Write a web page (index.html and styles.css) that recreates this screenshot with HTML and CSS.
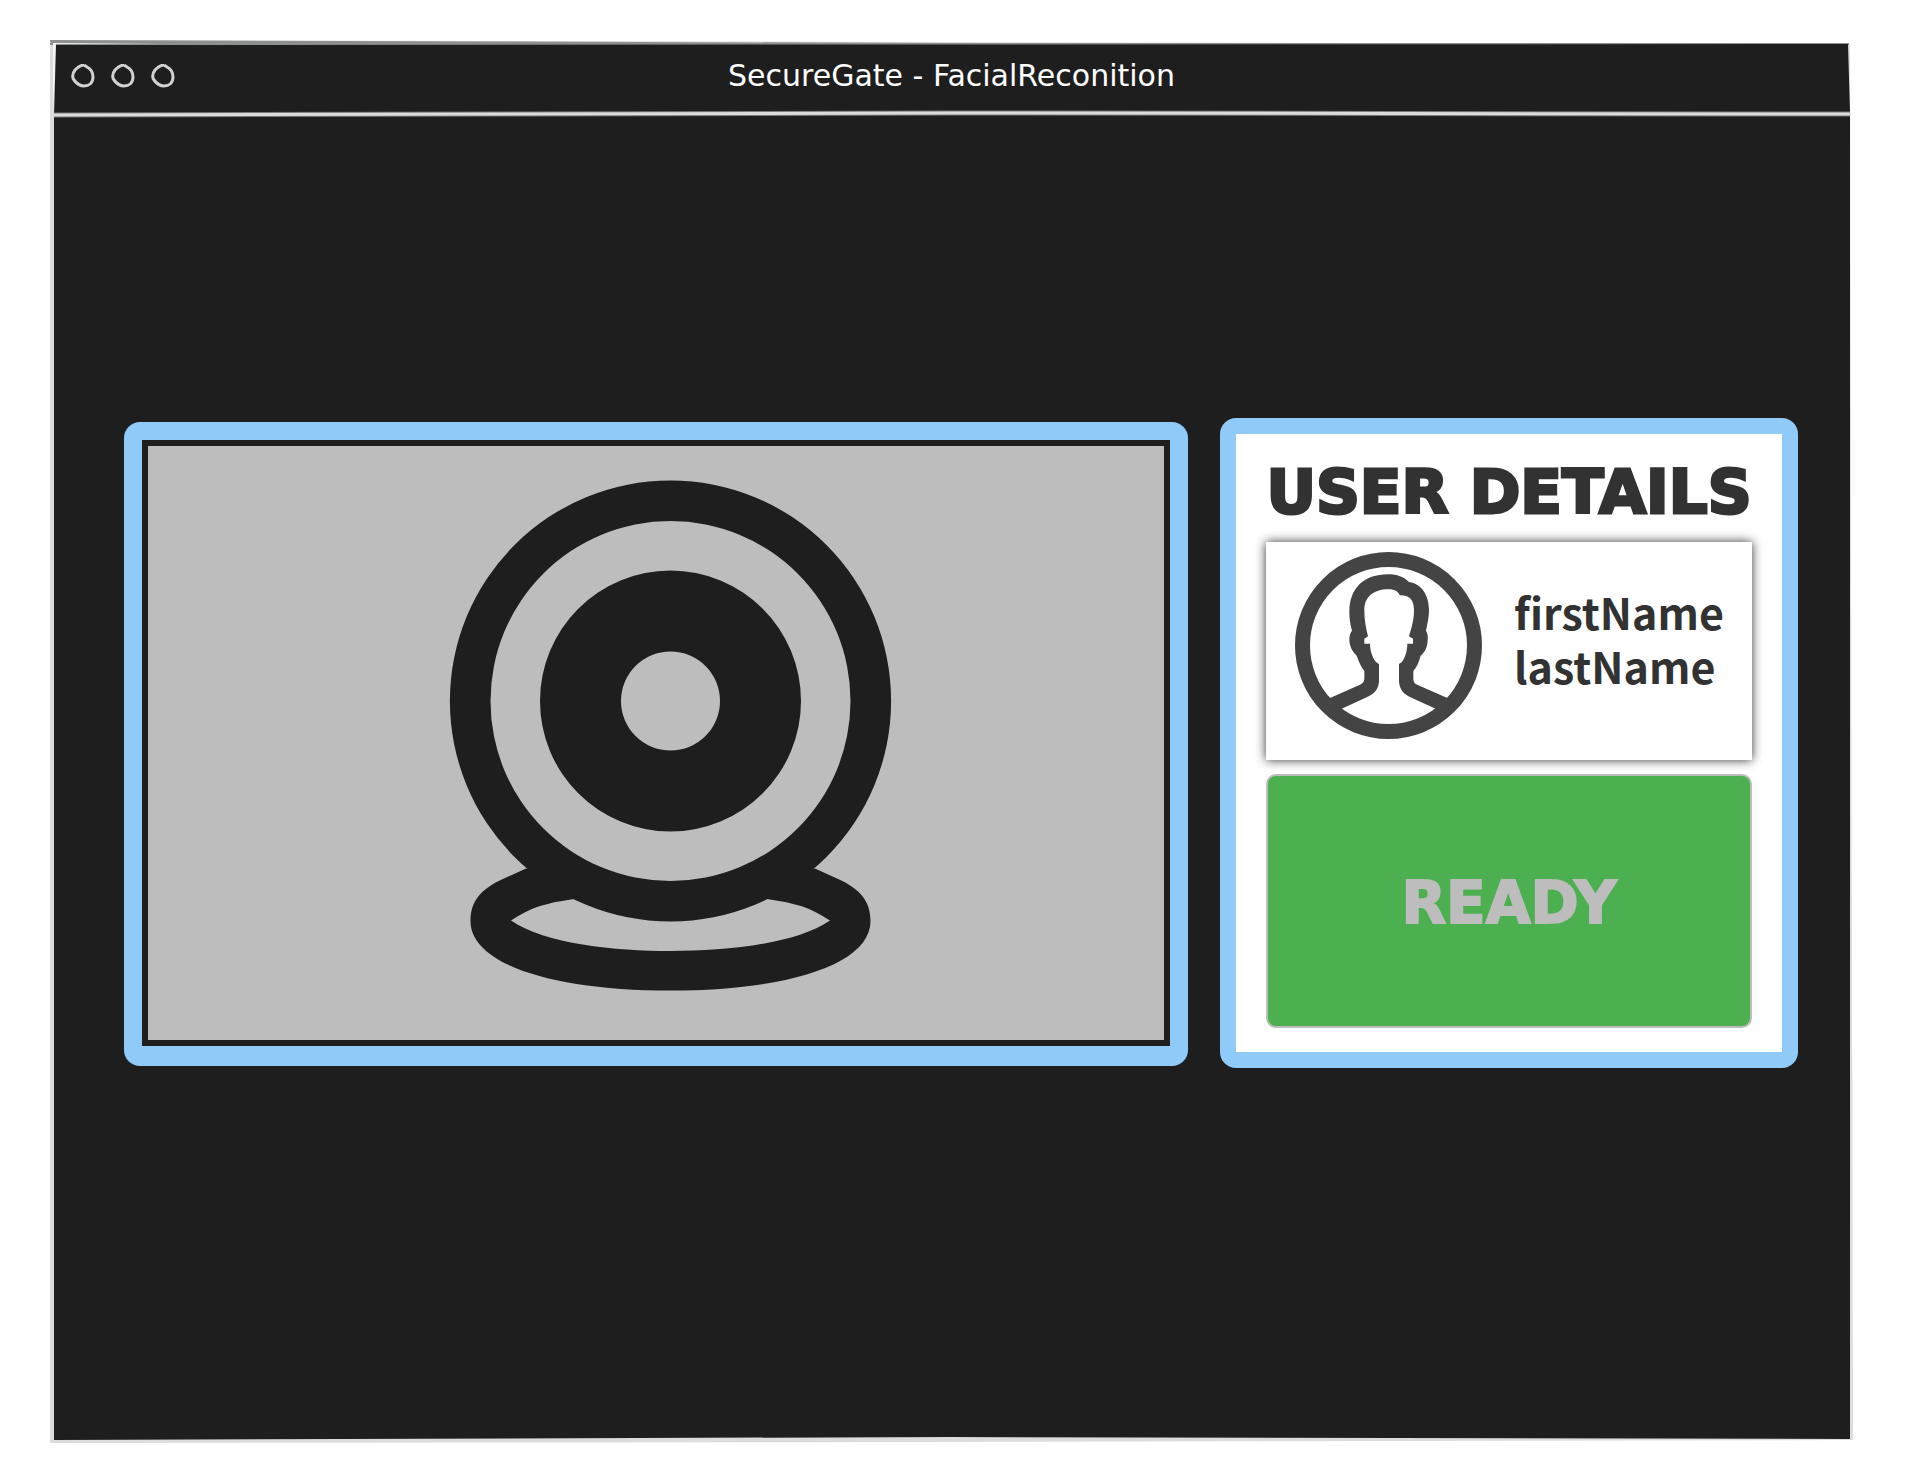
FILE: index.html
```html
<!DOCTYPE html>
<html lang="en">
<head>
<meta charset="utf-8">
<meta name="viewport" content="width=device-width, initial-scale=1">
<title>SecureGate - FacialReconition</title>
<link rel="stylesheet" href="styles.css">
</head>
<body>
<div class="window">
  <svg class="window-outline" viewBox="0 0 1803 1403" preserveAspectRatio="none" aria-hidden="true">
    <path fill="#dcdcdc" d="M0 0L900 2L1800 4L1803 1400L900 1402L0 1403Z"/>
    <path fill="#8e9090" d="M0 0L900 3L1799 3V5H0V3H1V2H0Z"/>
    <path fill="#f4f4f4" d="M3 3L110 4H6L3 75Z"/>
    <path fill="#1e1e1e" d="M6 5L1798 4L1800 72V1399L900 1397L4 1400V76Z"/>
    <path fill="none" stroke="#77797a" stroke-width="5" d="M4 75L900 73L1800 74"/>
    <path fill="none" stroke="#dcdcdc" stroke-width="3" d="M3 75L900 73L1801 74"/>
  </svg>
  <header class="titlebar">
    <div class="dots">
      <svg class="dot" viewBox="0 0 24 24" aria-hidden="true"><path d="M13 1C10 1 7 3 4 6C1 10 1 13 3 16C6 20 9 22 13 22C18 22 22 19 22 13C22 9 20 5 16 3L13 1"/></svg>
      <svg class="dot" viewBox="0 0 24 24" aria-hidden="true"><path d="M13 1C10 1 7 3 4 6C1 10 1 13 3 16C6 20 9 22 13 22C18 22 22 19 22 13C22 9 20 5 16 3L13 1"/></svg>
      <svg class="dot" viewBox="0 0 24 24" aria-hidden="true"><path d="M13 1C10 1 7 3 4 6C1 10 1 13 3 16C6 20 9 22 13 22C18 22 22 19 22 13C22 9 20 5 16 3L13 1"/></svg>
    </div>
    <h1 class="title">SecureGate - FacialReconition</h1>
  </header>
  <main class="content">
    <section class="camera" aria-label="Camera">
      <svg class="camera-view" viewBox="148 446 1016 594" role="img" aria-label="Webcam">
        <g fill="#1e1e1e" fill-rule="evenodd">
          <path d="M670.500 480.500a220.500 220.500 0 1 0 0 441a220.500 220.500 0 1 0 0-441ZM670.500 521a180 180 0 1 1 0 360a180 180 0 1 1 0-360Z"/>
          <path d="M670.500 570.500a130.500 130.500 0 1 0 0 261a130.500 130.500 0 1 0 0-261ZM670.500 651.500a49.500 49.500 0 1 1 0 99a49.500 49.500 0 1 1 0-99Z"/>
          <path d="M526 868.500L504 878.500C480 889 470.500 902 470.500 921C470.500 965 555 990.500 670.500 990.500S870.500 965 870.500 921C870.500 902 861 889 837 878.500L815 868.500L760 880L767 899C801 904 812 909 830 920.500C796 944 726 951 670.500 951S545 944 511 920.500C529 909 540 904 574 899L581 880Z"/>
        </g>
      </svg>
    </section>
    <section class="details">
      <h2 class="details-title">USER DETAILS</h2>
      <div class="user-card">
        <svg class="avatar" viewBox="75 65 561 561" aria-hidden="true">
          <circle cx="355.500" cy="345.500" r="258" fill="none" stroke="#444" stroke-width="45"/>
          <path fill="#444" d="M180 503L270 463C283 457 283 450 283 440V422C272 408 266 392 260 376C245 362 238 345 238 327C238 315 241 308 246 301C240 280 238 262 238 245C238 175 280 132 355 132C380 132 402 140 417 155C455 160 477 195 477 240C477 262 472 282 468 301C474 312 474 320 473 330C472 350 466 365 452 376C447 394 441 410 430 422V440C430 455 432 459 445 465L532 503L540 520L497 535L418 499C397 489 387 472 387 450V401L395 396C405 382 412 362 412 340H429V325L417 318C424 295 432 270 432 240C432 208 418 194 390 195C382 181 372 177 355 177C310 177 283 200 283 240C283 270 288 295 294 318L283 325V340H300C300 362 307 380 318 395L327 402V450C327 475 315 490 290 501L215 535L172 520Z"/>
        </svg>
        <p class="user-name">firstName<br>lastName</p>
      </div>
      <button class="ready" type="button">READY</button>
    </section>
  </main>
</div>
</body>
</html>
```
FILE: styles.css
```css
* {
  box-sizing: border-box;
}

body {
  margin: 0;
  padding: 40px 53px 41px 50px;
  background: #fff;
  color: #323232;
  font-family: "DejaVu Sans", sans-serif;
}

.window {
  position: relative;
  min-height: calc(100vh - 81px);
}

/* Rough hand-drawn outline behind the window content */
.window-outline {
  position: absolute;
  inset: 0;
  width: 100%;
  height: 100%;
  z-index: -1;
}

.titlebar {
  display: grid;
  grid-template-columns: 1fr auto 1fr;
  align-items: center;
  height: 72px;
  padding: 0 21px;
}

.dots {
  display: flex;
  gap: 16px;
}

.dot {
  width: 24px;
  height: 24px;
  fill: none;
  stroke: #d2d2d2;
  stroke-width: 3;
}

.title {
  margin: 0;
  color: #fff;
  font-size: 30px;
  font-weight: 400;
  line-height: 40px;
}

.content {
  display: grid;
  grid-template-columns: 1064fr 578fr;
  gap: 32px;
  align-items: start;
  padding: 306px 55px 40px 74px;
}

.camera {
  margin-top: 4px;
  padding: 18px 18px 20px;
  border-radius: 16px;
  background: #90caf9;
}

.camera-view {
  display: block;
  width: 100%;
  border: 6px solid #1e1e1e;
  background: #bdbdbd;
}

.details {
  border: 16px solid #90caf9;
  border-radius: 16px;
  padding: 0 30px 24px;
  background: #fff;
}

.details-title {
  display: flex;
  justify-content: center;
  margin: 0;
  padding-top: 8px;
  font-size: 61px;
  font-weight: 700;
  line-height: 100px;
  white-space: nowrap;
  -webkit-text-stroke: 3px currentColor;
}

.user-card {
  display: flex;
  gap: 32px;
  height: 218px;
  padding: 10px 0 0 29px;
  background: #fff;
  box-shadow: 0 0 10px rgba(0, 0, 0, 0.8);
}

.avatar {
  flex: none;
  width: 187px;
  height: 187px;
}

.user-name {
  margin: 0;
  padding-top: 32px;
  font: 700 43px/54px "Noto Sans CJK JP", sans-serif;
}

.ready {
  display: block;
  width: 100%;
  height: 254px;
  margin-top: 14px;
  padding-top: 4px;
  border: 2px solid #bdbdbd;
  border-radius: 10px;
  background: #4caf50;
  color: #bdbdbd;
  font: 700 58px/64px "DejaVu Sans", sans-serif;
  -webkit-text-stroke: 2px currentColor;
}
```
